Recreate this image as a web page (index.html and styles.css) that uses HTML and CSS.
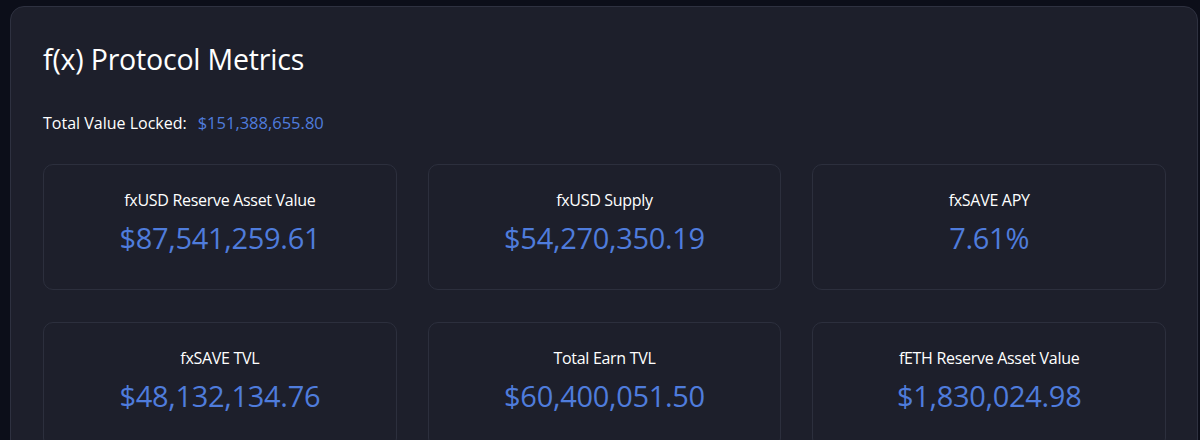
FILE: index.html
```html
<!DOCTYPE html>
<html>
<head>
<meta charset="utf-8">
<link rel="stylesheet" href="styles.css">
</head>
<body>
<div class="panel">
  <h1 class="title">f(x) Protocol Metrics</h1>
  <div class="tvl"><span class="tvl-label">Total Value Locked:</span><span class="tvl-value">$151,388,655.80</span></div>
  <div class="grid">
    <div class="card"><div class="label">fxUSD Reserve Asset Value</div><div class="value">$87,541,259.61</div></div>
    <div class="card"><div class="label">fxUSD Supply</div><div class="value">$54,270,350.19</div></div>
    <div class="card"><div class="label">fxSAVE APY</div><div class="value">7.61%</div></div>
    <div class="card"><div class="label">fxSAVE TVL</div><div class="value">$48,132,134.76</div></div>
    <div class="card"><div class="label">Total Earn TVL</div><div class="value">$60,400,051.50</div></div>
    <div class="card"><div class="label">fETH Reserve Asset Value</div><div class="value">$1,830,024.98</div></div>
  </div>
</div>
</body>
</html>
```
FILE: styles.css
```css
html, body {
  margin: 0;
  padding: 0;
  background: #0c0e19;
  height: 100%;
  overflow: hidden;
}
body {
  font-family: "Open Sans", "Noto Sans", sans-serif;
  color: #ffffff;
  padding: 6px 2px 0 10px;
  box-sizing: border-box;
}
.panel {
  background: #1d1f2b;
  border: 1px solid #2e3140;
  border-radius: 14px;
  padding: 34px 31px 40px 32px;
  min-height: 600px;
}
.title {
  margin: 0;
  font-size: 28.5px;
  font-weight: 400;
  line-height: 36px;
  letter-spacing: -0.2px;
}
.tvl {
  margin-top: 35px;
  line-height: 22px;
  display: flex;
  align-items: baseline;
  gap: 11px;
}
.tvl-label {
  font-size: 16px;
}
.tvl-value {
  font-size: 16.5px;
  color: #4f7cdc;
}
.grid {
  margin-top: 30px;
  display: grid;
  grid-template-columns: repeat(3, 1fr);
  column-gap: 31px;
  row-gap: 32px;
}
.card {
  border: 1px solid #2c2f3d;
  border-radius: 10px;
  display: flex;
  flex-direction: column;
  align-items: center;
  padding-top: 23px;
  box-sizing: border-box;
  height: 126px;
}
.label {
  font-size: 16px;
  line-height: 24px;
  letter-spacing: -0.3px;
}
.value {
  margin-top: 6px;
  font-size: 29px;
  line-height: 40px;
  color: #4f7cdc;
  letter-spacing: -0.3px;
}
```
